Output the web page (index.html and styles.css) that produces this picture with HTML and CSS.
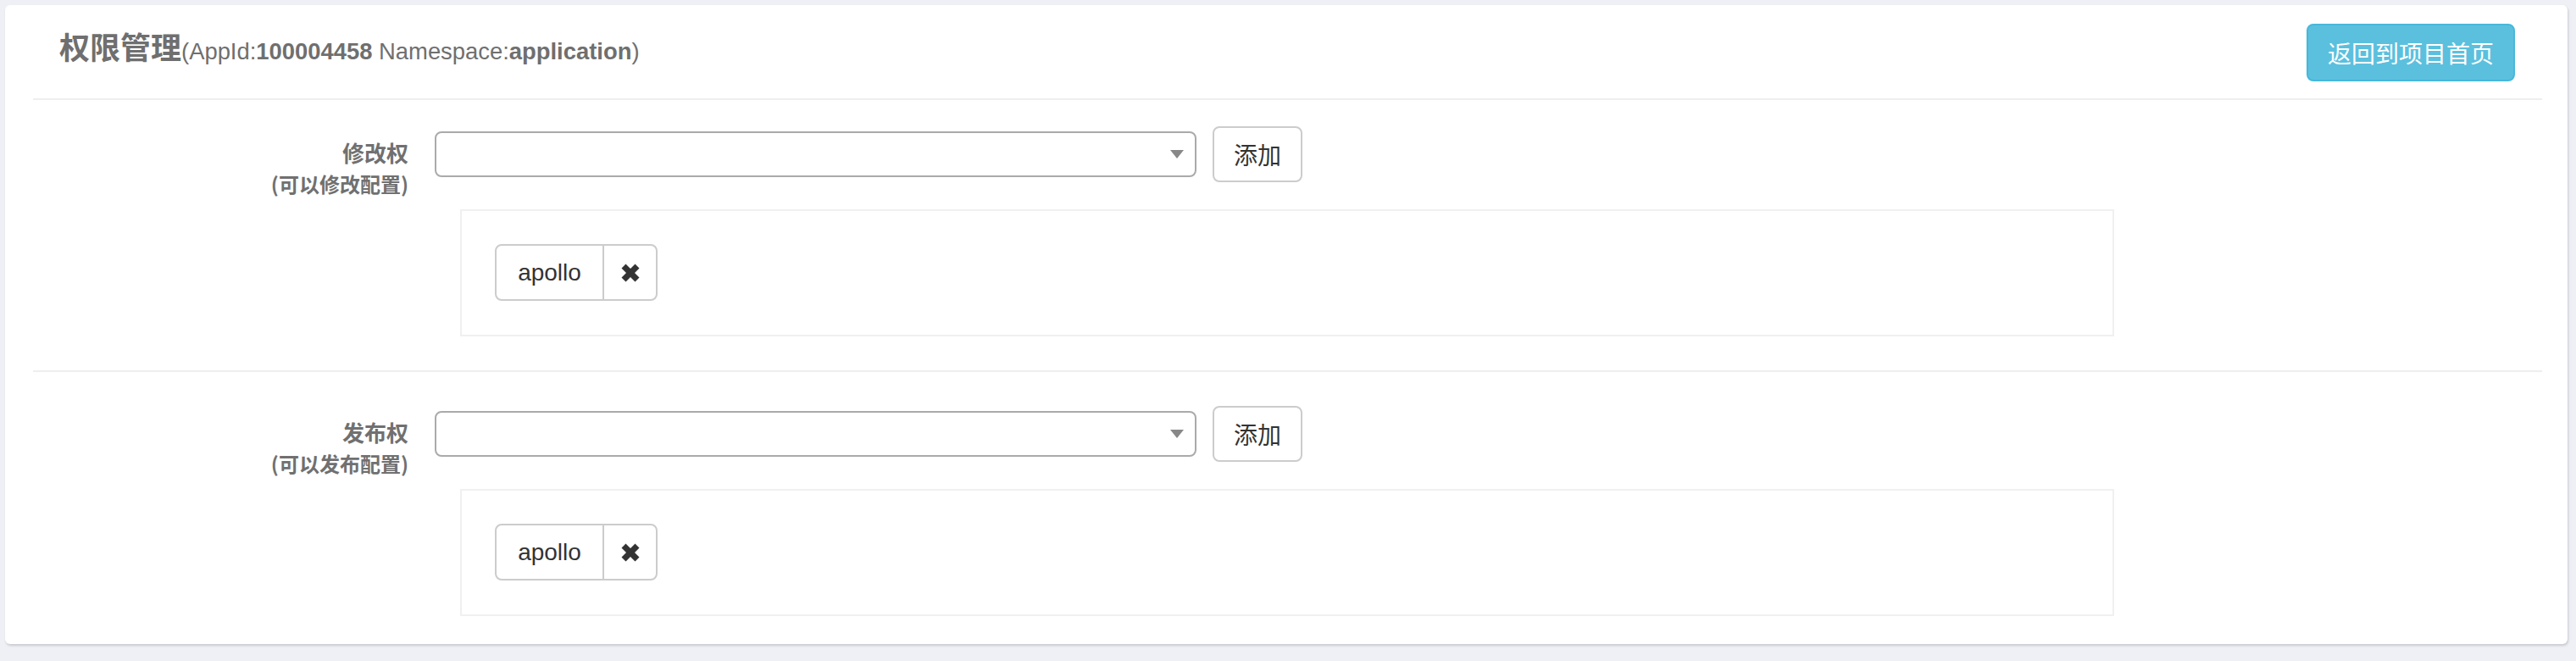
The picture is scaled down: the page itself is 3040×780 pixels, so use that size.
FILE: index.html
```html
<!DOCTYPE html>
<html lang="zh-CN">
<head>
<meta charset="utf-8">
<title>权限管理</title>
<link rel="stylesheet" href="styles.css">
</head>
<body>
<div class="page">
  <div class="card">
    <div class="card-header">
      <div class="title">
        <span class="title-main">权限管理</span><span class="title-sub">(AppId:<b>100004458</b> Namespace:<b>application</b>)</span>
      </div>
      <button class="btn-info">返回到项目首页</button>
    </div>

    <div class="section section-first">
      <div class="form-row">
        <div class="label">
          <div class="label-main">修改权</div>
          <div class="label-sub">(可以修改配置)</div>
        </div>
        <div class="controls">
          <div class="select">
            <span class="select-arrow"></span>
          </div>
          <button class="btn-default">添加</button>
        </div>
      </div>
      <div class="tag-box">
        <div class="tag">
          <span class="tag-name">apollo</span>
          <span class="tag-remove">
            <svg width="24" height="24" viewBox="0 0 24 24"><path d="M1.5 6.5 L6.5 1.5 L12 7 L17.5 1.5 L22.5 6.5 L17 12 L22.5 17.5 L17.5 22.5 L12 17 L6.5 22.5 L1.5 17.5 L7 12 Z" fill="#333"/></svg>
          </span>
        </div>
      </div>
    </div>

    <div class="section section-last">
      <div class="form-row">
        <div class="label">
          <div class="label-main">发布权</div>
          <div class="label-sub">(可以发布配置)</div>
        </div>
        <div class="controls">
          <div class="select">
            <span class="select-arrow"></span>
          </div>
          <button class="btn-default">添加</button>
        </div>
      </div>
      <div class="tag-box">
        <div class="tag">
          <span class="tag-name">apollo</span>
          <span class="tag-remove">
            <svg width="24" height="24" viewBox="0 0 24 24"><path d="M1.5 6.5 L6.5 1.5 L12 7 L17.5 1.5 L22.5 6.5 L17 12 L22.5 17.5 L17.5 22.5 L12 17 L6.5 22.5 L1.5 17.5 L7 12 Z" fill="#333"/></svg>
          </span>
        </div>
      </div>
    </div>
  </div>
</div>
</body>
</html>
```

FILE: styles.css
```css
* { box-sizing: border-box; }

html, body {
  margin: 0;
  padding: 0;
  background: #eff0f6;
  font-family: "Liberation Sans", "Noto Sans CJK SC", sans-serif;
  color: #333;
}

.page {
  padding: 6px 10px 20px 6px;
}

.card {
  background: #fff;
  border-radius: 6px;
  box-shadow: 1px 2px 3px rgba(0, 0, 0, 0.16);
  padding: 0 30px 0 33px;
  height: 754px;
}

.card-header {
  display: flex;
  align-items: center;
  justify-content: space-between;
  padding: 22px 32px 20px 31px;
  border-bottom: 2px solid #eeeeee;
}

.title {
  color: #6f6f6f;
  margin-top: -16px;
}

.title-main {
  font-family: "Noto Sans CJK SC", sans-serif;
  font-size: 36px;
  font-weight: 700;
}

.title-sub {
  font-size: 27.4px;
}

.title-sub b {
  font-weight: 700;
}

.btn-info {
  font-family: "Noto Sans CJK SC", sans-serif;
  font-size: 28px;
  color: #fff;
  background: #5bc0de;
  border: 2px solid #46b8da;
  border-radius: 8px;
  width: 246px;
  height: 68px;
  padding: 0;
  line-height: 1;
}

.section {
  border-bottom: 2px solid #eeeeee;
  padding: 31px 0 40px;
}

.section-last {
  border-bottom: none;
  padding: 40px 0 0;
}

.form-row {
  display: flex;
  align-items: flex-start;
}

.label {
  width: 443px;
  margin-right: 31px;
  text-align: right;
  font-family: "Noto Sans CJK SC", sans-serif;
  font-weight: 700;
  color: #707070;
  padding-top: 12px;
  line-height: 37px;
}

.label-main {
  font-size: 26px;
}

.label-sub {
  font-size: 24px;
}

.controls {
  display: flex;
  align-items: center;
  height: 66px;
}

.select {
  width: 899px;
  height: 54px;
  border: 2px solid #aaaaaa;
  border-radius: 8px;
  display: flex;
  align-items: center;
  justify-content: flex-end;
  padding-right: 13px;
}

.select-arrow {
  width: 0;
  height: 0;
  border-style: solid;
  border-width: 10px 8px 0 8px;
  border-color: #888 transparent transparent transparent;
}

.btn-default {
  margin-left: 19px;
  width: 106px;
  height: 66px;
  background: #fff;
  border: 2px solid #cccccc;
  border-radius: 8px;
  font-family: "Noto Sans CJK SC", sans-serif;
  font-size: 28px;
  color: #333;
  padding: 0;
  line-height: 1;
}

.tag-box {
  margin-left: 504px;
  margin-top: 12px;
  width: 1952px;
  height: 150px;
  border: 2px solid #f0f0f0;
  padding: 39px;
  display: flex;
  align-items: flex-start;
}

.tag {
  display: flex;
  height: 67px;
  border: 2px solid #cccccc;
  border-radius: 8px;
  overflow: hidden;
}

.tag-name {
  width: 127px;
  display: flex;
  align-items: center;
  justify-content: center;
  font-size: 28px;
  color: #333;
  border-right: 2px solid #cccccc;
}

.tag-remove {
  width: 61px;
  display: flex;
  align-items: center;
  justify-content: center;
}

.tag-remove svg {
  display: block;
}
```
